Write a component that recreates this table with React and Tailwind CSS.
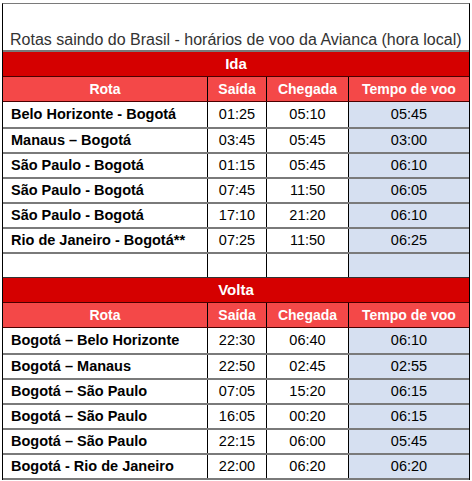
import React from "react";

const ida = [
  ["Belo Horizonte - Bogotá", "01:25", "05:10", "05:45"],
  ["Manaus – Bogotá", "03:45", "05:45", "03:00"],
  ["São Paulo - Bogotá", "01:15", "05:45", "06:10"],
  ["São Paulo - Bogotá", "07:45", "11:50", "06:05"],
  ["São Paulo - Bogotá", "17:10", "21:20", "06:10"],
  ["Rio de Janeiro - Bogotá**", "07:25", "11:50", "06:25"],
];

const volta = [
  ["Bogotá – Belo Horizonte", "22:30", "06:40", "06:10"],
  ["Bogotá – Manaus", "22:50", "02:45", "02:55"],
  ["Bogotá – São Paulo", "07:05", "15:20", "06:15"],
  ["Bogotá – São Paulo", "16:05", "00:20", "06:15"],
  ["Bogotá – São Paulo", "22:15", "06:00", "05:45"],
  ["Bogotá - Rio de Janeiro", "22:00", "06:20", "06:20"],
];

function SectionTitle({ label }) {
  return (
    <div className="flex h-[25px] items-center justify-center border-b border-[#4a0000] bg-[#d50000] text-[15px] font-bold text-white">
      {label}
    </div>
  );
}

function HeaderRow() {
  return (
    <div className="flex h-[25px] border-b border-[#4a0000] bg-[#f44848] text-[14px] font-bold text-white">
      <div className="flex w-[205px] items-center justify-center border-r border-black">Rota</div>
      <div className="flex w-[59px] items-center justify-center border-r border-black">Saída</div>
      <div className="flex w-[82px] items-center justify-center border-r border-black">Chegada</div>
      <div className="flex flex-1 items-center justify-center">Tempo de voo</div>
    </div>
  );
}

function DataRow({ row, first }) {
  return (
    <div
      className={
        first
          ? "flex h-[27px] border-b-2 border-[#7a7a7a] text-[14.5px] text-black"
          : "flex h-[25px] border-b-2 border-[#7a7a7a] text-[14.5px] text-black"
      }
    >
      <div className="flex w-[205px] items-center border-r border-black pl-2 font-bold">{row[0]}</div>
      <div className="flex w-[59px] items-center justify-center border-r border-black">{row[1]}</div>
      <div className="flex w-[82px] items-center justify-center border-r border-black">{row[2]}</div>
      <div className="flex flex-1 items-center justify-center bg-[#d6e0f1]">{row[3]}</div>
    </div>
  );
}

function EmptyRow() {
  return (
    <div className="flex h-[24px] border-b border-[#333333]">
      <div className="w-[205px] border-r border-black"></div>
      <div className="w-[59px] border-r border-black"></div>
      <div className="w-[82px] border-r border-black"></div>
      <div className="flex-1 bg-[#d6e0f1]"></div>
    </div>
  );
}

export default function App() {
  return (
    <div className="bg-white pl-[2px] pt-[3px]" style={{ fontFamily: '"Liberation Sans", Arial, sans-serif' }}>
      <div className="w-[468px] border-x border-t border-x-black border-t-[#7a7a7a]">
        <div className="flex h-[48px] items-end border-b-2 border-[#7a7a7a] pb-[1px] pl-[7px] text-[16px] leading-[18px] text-[#333333]">
          Rotas saindo do Brasil - horários de voo da Avianca (hora local)
        </div>
        <SectionTitle label="Ida" />
        <HeaderRow />
        {ida.map((r, i) => (
          <DataRow key={"i" + i} row={r} first={i === 0} />
        ))}
        <EmptyRow />
        <SectionTitle label="Volta" />
        <HeaderRow />
        {volta.map((r, i) => (
          <DataRow key={"v" + i} row={r} first={i === 0} />
        ))}
      </div>
    </div>
  );
}
